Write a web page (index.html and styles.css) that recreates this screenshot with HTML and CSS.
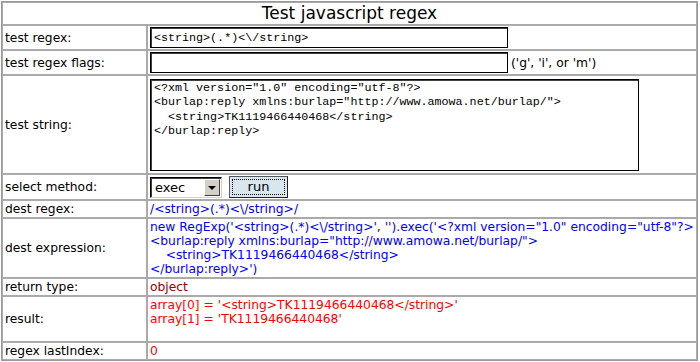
FILE: index.html
```html
<!DOCTYPE html>
<html lang="en">
<head>
<title>Test javascript regex</title>
<meta charset="utf-8">
<link rel="stylesheet" href="styles.css">
</head>
<body>

<table class="regex_table">
  <colgroup>
    <col class="label_col">
    <col>
  </colgroup>
  <tr>
    <td class="title" colspan="2">Test javascript regex</td>
  </tr>
  <tr>
    <td class="label">test regex:</td>
    <td class="value"><input class="text_input" type="text" value="&lt;string&gt;(.*)&lt;\/string&gt;"></td>
  </tr>
  <tr>
    <td class="label">test regex flags:</td>
    <td class="value"><div class="inline_row"><input class="text_input" type="text" value=""><span class="hint">('g', 'i', or 'm')</span></div></td>
  </tr>
  <tr>
    <td class="label">test string:</td>
    <td class="value"><textarea class="test_string">&lt;?xml version="1.0" encoding="utf-8"?&gt;
&lt;burlap:reply xmlns:burlap="http://www.amowa.net/burlap/"&gt;
  &lt;string&gt;TK1119466440468&lt;/string&gt;
&lt;/burlap:reply&gt;</textarea></td>
  </tr>
  <tr>
    <td class="label">select method:</td>
    <td class="value">
      <div class="inline_row">
        <div class="fake_select">
          <span class="select_text">exec</span>
          <span class="select_arrow"><span class="triangle"></span></span>
        </div>
        <button class="run_button" type="button"><span class="focus_ring">run</span></button>
      </div>
    </td>
  </tr>
  <tr>
    <td class="label">dest regex:</td>
    <td class="value blue">/&lt;string&gt;(.*)&lt;\/string&gt;/</td>
  </tr>
  <tr>
    <td class="label">dest expression:</td>
    <td class="value blue">new RegExp('&lt;string&gt;(.*)&lt;\/string&gt;', '').exec('&lt;?xml version="1.0" encoding="utf-8"?&gt;<br>&lt;burlap:reply xmlns:burlap="http://www.amowa.net/burlap/"&gt;<br>&nbsp;&nbsp;&nbsp;&nbsp;&lt;string&gt;TK1119466440468&lt;/string&gt;<br>&lt;/burlap:reply&gt;')</td>
  </tr>
  <tr>
    <td class="label">return type:</td>
    <td class="value dark_red">object</td>
  </tr>
  <tr>
    <td class="label">result:</td>
    <td class="value red">array[0] = '&lt;string&gt;TK1119466440468&lt;/string&gt;'<br>array[1] = 'TK1119466440468'<br>&nbsp;</td>
  </tr>
  <tr>
    <td class="label">regex lastIndex:</td>
    <td class="value red">0</td>
  </tr>
</table>

</body>
</html>
```

FILE: styles.css
```css
body {
  margin: 1px;
  font-family: "DejaVu Sans", Verdana, sans-serif;
  font-size: 12.3px;
  line-height: 14px;
  color: #000;
  background: #fff;
}
.regex_table {
  width: 697px;
  border: 1px solid #999;
  border-spacing: 0;
  table-layout: fixed;
}
.label_col {
  width: 145px;
}
.regex_table td {
  border: 1px solid #aaa;
  padding: 1px 2px;
}
.title {
  text-align: center;
  font-size: 17px;
  line-height: 19px;
}
.label {
  white-space: nowrap;
}
.value {
  white-space: nowrap;
}
.inline_row {
  display: flex;
  align-items: center;
}
.text_input {
  display: block;
  box-sizing: border-box;
  width: 358px;
  height: 21px;
  margin: 0;
  padding: 0 3px;
  border: 1px solid #000;
  box-shadow: inset 1px 1px 0 #404040;
  font-family: "Liberation Mono", "Courier New", monospace;
  font-size: 11.7px;
  outline: none;
}
.hint {
  padding-left: 3px;
}
.test_string {
  display: block;
  box-sizing: border-box;
  width: 489px;
  height: 92px;
  margin: 2px 0 1px;
  padding: 1px 3px;
  border: 1px solid #000;
  box-shadow: inset 1px 1px 0 #404040;
  font-family: "Liberation Mono", "Courier New", monospace;
  font-size: 11.7px;
  line-height: 14.3px;
  resize: none;
  overflow: hidden;
}
.fake_select {
  display: flex;
  align-items: center;
  box-sizing: border-box;
  width: 72px;
  height: 21px;
  margin-top: 1px;
  border: 1px solid #000;
  border-right-color: #d4d0c8;
  border-bottom-color: #d4d0c8;
  box-shadow: inset 1px 1px 0 #404040;
  padding: 1px 1px 1px 2px;
}
.select_text {
  flex: 1;
  padding-left: 2px;
  font-size: 13px;
}
.select_arrow {
  display: flex;
  align-items: center;
  justify-content: center;
  box-sizing: border-box;
  width: 16px;
  height: 17px;
  background: #d4d0c8;
  border: 1px solid;
  border-color: #fff #404040 #404040 #fff;
}
.triangle {
  width: 0;
  height: 0;
  border-left: 4px solid transparent;
  border-right: 4px solid transparent;
  border-top: 4px solid #000;
}
.run_button {
  box-sizing: border-box;
  width: 59px;
  height: 22px;
  margin: 0 0 0 7px;
  padding: 2px;
  background: #d8e6f0;
  border: 1px solid;
  border-color: #555 #222 #222 #555;
  font-family: inherit;
  font-size: 13px;
  color: #000;
}
.focus_ring {
  display: block;
  height: 100%;
  box-sizing: border-box;
  border: 1px dotted #000;
  line-height: 14px;
}
.blue {
  color: #0000ff;
}
.dark_red {
  color: #990000;
}
.red {
  color: #ff0000;
}
```
